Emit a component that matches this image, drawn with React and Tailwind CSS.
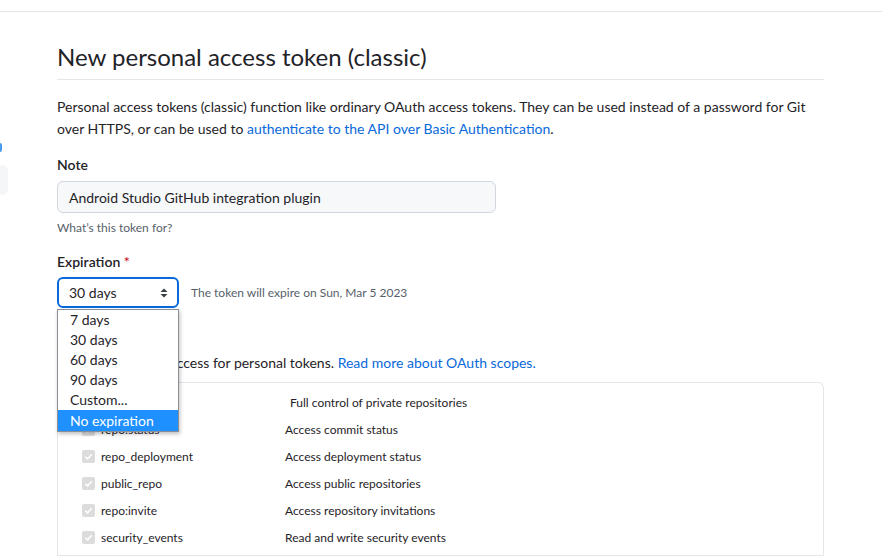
import { useState } from "react"

const options = ["7 days", "30 days", "60 days", "90 days", "Custom...", "No expiration"]

const subScopes = [
  { name: "repo:status", desc: "Access commit status" },
  { name: "repo_deployment", desc: "Access deployment status" },
  { name: "public_repo", desc: "Access public repositories" },
  { name: "repo:invite", desc: "Access repository invitations" },
  { name: "security_events", desc: "Read and write security events" }
]

function CheckBox() {
  return (
    <span className="flex h-[13px] w-[13px] items-center justify-center rounded-[2px] bg-[#dcdcdc]">
      <svg width="9" height="9" viewBox="0 0 10 10" fill="none">
        <path d="M1.5 5.2 L4 7.6 L8.6 2.4" stroke="white" strokeWidth="1.6" />
      </svg>
    </span>
  )
}

function SelectArrows() {
  return (
    <svg width="8" height="10" viewBox="0 0 8 10" fill="#3a3f45">
      <path d="M4 0.5 L7.5 4 L0.5 4 Z" />
      <path d="M4 9.5 L7.5 6 L0.5 6 Z" />
    </svg>
  )
}

export default function App() {
  const [selected] = useState("30 days")

  return (
    <div className="min-h-[557px] overflow-hidden bg-white text-[#1f2328]" style={{ fontFamily: "Lato, 'Open Sans', sans-serif" }}>
      <div className="h-[12px] border-b border-[#e3e7eb]" />

      <div className="flex">
        {/* clipped sidebar edge */}
        <div className="w-[8px] shrink-0">
          <div className="mt-[131px] h-[9px] w-[2px] rounded-r bg-[#4a9af0]" />
          <div className="mt-[13px] h-[30px] w-[8px] rounded-r-md bg-[#f4f6f8]" />
        </div>

        <div className="w-[767px] pl-[49px] box-content">
          <h1 className="mt-[27px] border-b border-[#e3e7eb] pb-[4px] text-[24px] leading-[36px] font-normal">
            New personal access token (classic)
          </h1>

          <p className="mt-[16px] text-[14px] leading-[22px]">
            Personal access tokens (classic) function like ordinary OAuth access tokens. They can be used instead of a password for Git over HTTPS, or can be used to{" "}
            <span className="text-[#0969da]">authenticate to the API over Basic Authentication</span>.
          </p>

          <div className="mt-[14px] text-[14px] leading-[21px] font-semibold">Note</div>
          <div className="mt-[6px] flex h-[32px] w-[439px] items-center rounded-md border border-[#d0d7de] bg-[#f6f8fa] px-[11px] text-[14px]">
            Android Studio GitHub integration plugin
          </div>
          <div className="mt-[6px] text-[12px] leading-[18px] text-[#57606a]">What’s this token for?</div>

          <div className="mt-[14px] text-[14px] leading-[21px] font-semibold">
            Expiration <span className="text-[#cf222e]">*</span>
          </div>

          <div className="relative mt-[5px] flex items-center">
            <div className="flex h-[31px] w-[122px] items-center justify-between rounded-md border-2 border-[#0969da] pl-[10px] pr-[9px] text-[14px]">
              <span>{selected}</span>
              <SelectArrows />
            </div>
            <span className="ml-[12px] text-[12px] text-[#57606a]">The token will expire on Sun, Mar 5 2023</span>

            {/* open dropdown list */}
            <div className="absolute left-0 top-[32px] z-10 w-[122px] border border-[#8a8f95] bg-white shadow-[1px_2px_4px_rgba(0,0,0,0.25)]">
              {options.map((o) => (
                <div
                  key={o}
                  className={
                    o === "No expiration"
                      ? "h-[21px] bg-[#1e90ff] pl-[12px] text-[14px] leading-[21px] text-white"
                      : "h-[20px] pl-[12px] text-[14px] leading-[20px]"
                  }
                >
                  {o}
                </div>
              ))}
            </div>
          </div>

          <div className="mt-[22px] text-[14px] leading-[21px] font-semibold">Select scopes</div>
          <p className="mt-[1px] text-[14px] leading-[22px]">
            Scopes define the access for personal tokens.{" "}
            <span className="text-[#0969da]">Read more about OAuth scopes.</span>
          </p>

          <div className="mt-[8px] rounded-t-md border border-b-0 border-[#e3e7eb] pt-[6px]">
            <div className="flex h-[27px] items-center text-[12px]">
              <div className="ml-[5px]"><CheckBox /></div>
              <span className="ml-[5px] w-[209px] font-semibold">repo</span>
              <span>Full control of private repositories</span>
            </div>
            {subScopes.map((s) => (
              <div key={s.name} className="flex h-[27px] items-center text-[12px]">
                <div className="ml-[24px]"><CheckBox /></div>
                <span className="ml-[6px] w-[184px]">{s.name}</span>
                <span>{s.desc}</span>
              </div>
            ))}
            <div className="mt-[4px] border-b border-[#e3e7eb]" />
          </div>
        </div>
      </div>
    </div>
  )
}
